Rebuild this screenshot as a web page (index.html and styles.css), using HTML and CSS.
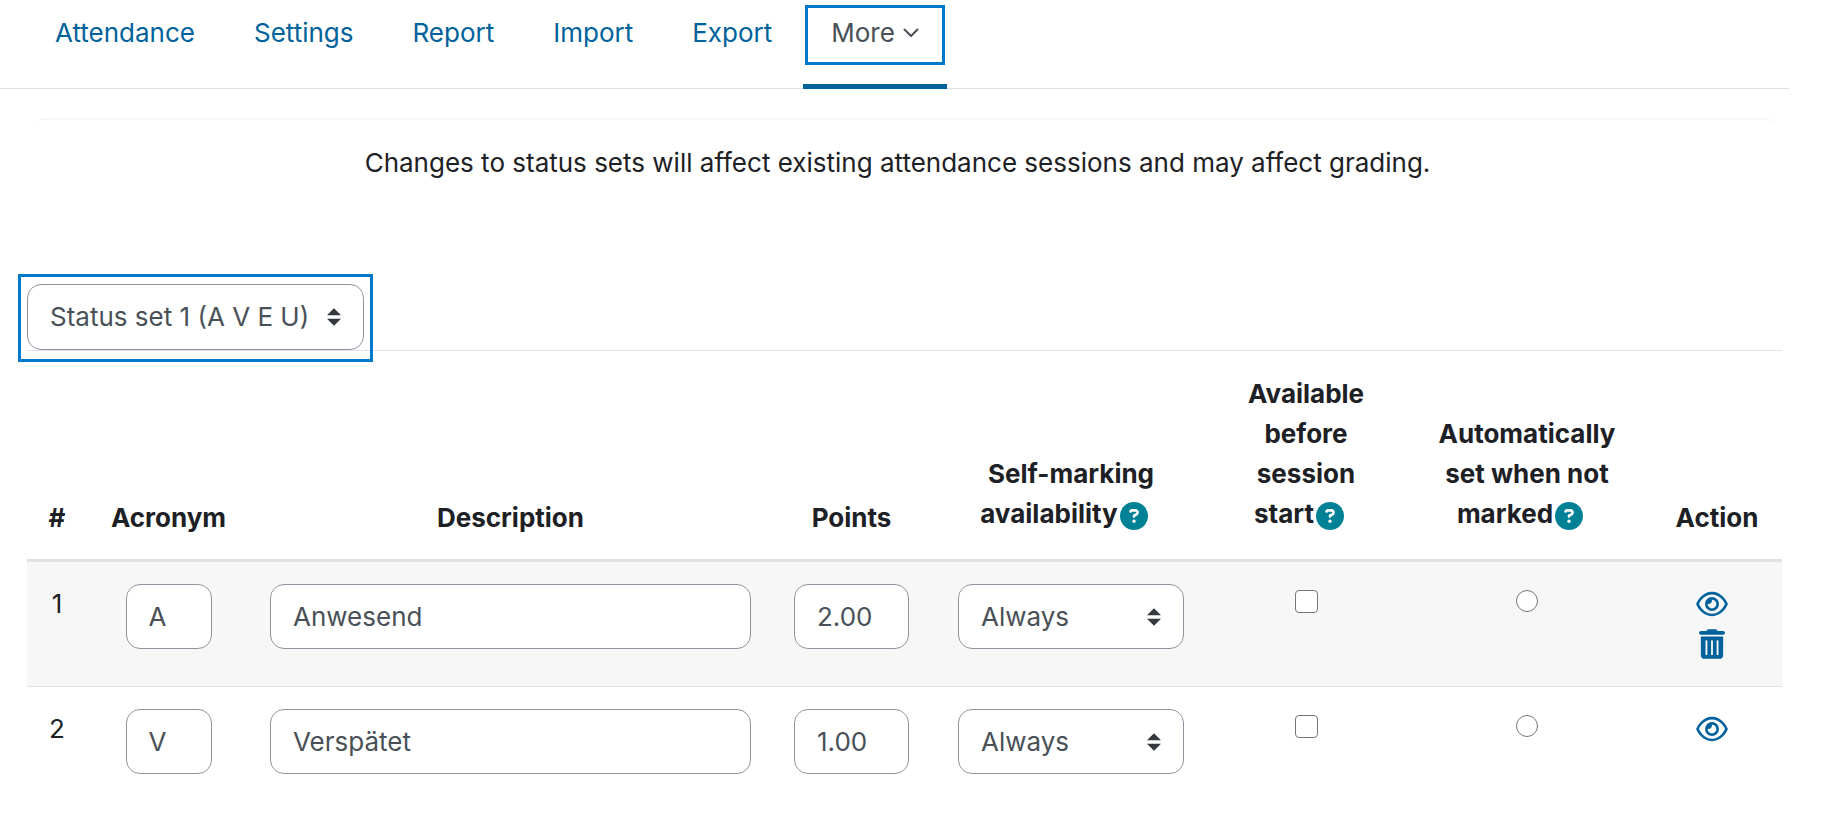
FILE: index.html
```html
<!DOCTYPE html>
<html lang="en">

<head>
    <meta charset="UTF-8">
    <meta name="viewport" content="width=device-width, initial-scale=1.0">
    <title>Attendance</title>
    <link rel="stylesheet" href="styles.css">
</head>

<body>
    <!-- shared icons -->
    <svg class="icon-defs" aria-hidden="true">
        <symbol id="icon-help" viewBox="0 0 512 512">
            <path d="M256 512A256 256 0 1 0 256 0a256 256 0 1 0 0 512zM169.800 165.300c7.900-22.300 29.100-37.300 52.800-37.300h58.300c34.900 0 63.100 28.300 63.100 63.100c0 22.600-12.100 43.500-31.700 54.800L280 264.400c-.2 13-10.900 23.600-24 23.600c-13.300 0-24-10.700-24-24V250.500c0-8.600 4.600-16.500 12.100-20.800l44.300-25.400c4.700-2.700 7.600-7.700 7.600-13.100c0-8.400-6.800-15.100-15.100-15.100H222.600c-3.400 0-6.400 2.100-7.500 5.300l-.4 1.200c-4.400 12.500-18.200 19-30.600 14.600s-19-18.200-14.600-30.600l.4-1.200zM224 352a32 32 0 1 1 64 0 32 32 0 1 1 -64 0z" />
        </symbol>
        <symbol id="icon-eye" viewBox="0 0 576 512">
            <path d="M288 80c-65.200 0-118.800 29.600-159.900 67.700C89.600 183.500 63 226 49.400 256c13.600 30 40.200 72.500 78.600 108.300C169.200 402.400 222.800 432 288 432s118.800-29.600 159.900-67.700C486.400 328.500 513 286 526.600 256c-13.600-30-40.200-72.500-78.700-108.300C406.800 109.600 353.200 80 288 80zM95.400 112.600C142.500 68.800 207.200 32 288 32s145.500 36.800 192.600 80.600c46.800 43.500 78.100 95.400 93 131.100c3.300 7.900 3.300 16.700 0 24.600c-14.900 35.700-46.200 87.700-93 131.100C433.500 443.200 368.800 480 288 480s-145.500-36.800-192.600-80.600C48.600 356 17.300 304 2.500 268.300c-3.300-7.900-3.300-16.700 0-24.600C17.300 208 48.600 156 95.400 112.600zM288 336c44.200 0 80-35.800 80-80s-35.800-80-80-80c-.7 0-1.300 0-2 0c1.300 5.100 2 10.500 2 16c0 35.300-28.700 64-64 64c-5.500 0-10.900-.7-16-2c0 .7 0 1.300 0 2c0 44.200 35.800 80 80 80zm0-208a128 128 0 1 1 0 256 128 128 0 1 1 0-256z" />
        </symbol>
        <symbol id="icon-trash" viewBox="0 0 448 512">
            <path d="M135.200 17.700C140.600 6.800 151.700 0 163.800 0H284.200c12.100 0 23.200 6.800 28.600 17.700L320 32h96c17.700 0 32 14.300 32 32s-14.300 32-32 32H32C14.300 96 0 81.700 0 64S14.300 32 32 32h96l7.200-14.300zM32 128H416V448c0 35.300-28.700 64-64 64H96c-35.300 0-64-28.700-64-64V128zm96 64c-8.800 0-16 7.200-16 16V432c0 8.800 7.200 16 16 16s16-7.200 16-16V208c0-8.800-7.200-16-16-16zm96 0c-8.800 0-16 7.200-16 16V432c0 8.800 7.200 16 16 16s16-7.200 16-16V208c0-8.800-7.200-16-16-16zm96 0c-8.800 0-16 7.200-16 16V432c0 8.800 7.200 16 16 16s16-7.200 16-16V208c0-8.800-7.200-16-16-16z" />
        </symbol>
    </svg>

    <nav class="tabs">
        <a href="#" class="tab">Attendance</a>
        <a href="#" class="tab">Settings</a>
        <a href="#" class="tab">Report</a>
        <a href="#" class="tab">Import</a>
        <a href="#" class="tab">Export</a>
        <button type="button" class="tab tab-more">More
            <svg class="chevron" viewBox="0 0 16 10" aria-hidden="true">
                <path d="M1.500 1.500L8 8l6.500-6.500" />
            </svg>
        </button>
    </nav>

    <main class="content">
        <div class="notice">Changes to status sets will affect existing attendance sessions and may affect grading.</div>

        <div class="set-picker">
            <select class="field select" id="statusset" aria-label="Status set">
                <option>Status set 1 (A V E U)</option>
            </select>
        </div>

        <table class="status-table">
            <colgroup>
                <col class="col-num">
                <col class="col-acronym">
                <col>
                <col class="col-points">
                <col class="col-self">
                <col class="col-before">
                <col class="col-auto">
                <col class="col-action">
            </colgroup>
            <thead>
                <tr>
                    <th>#</th>
                    <th>Acronym</th>
                    <th>Description</th>
                    <th>Points</th>
                    <th class="has-help">Self-marking availability<button type="button" class="help" aria-label="Help with self-marking"><svg><use href="#icon-help" /></svg></button></th>
                    <th class="has-help">Available before session start<button type="button" class="help" aria-label="Help with available before start"><svg><use href="#icon-help" /></svg></button></th>
                    <th class="has-help">Automatically set when not marked<button type="button" class="help" aria-label="Help with automatic status"><svg><use href="#icon-help" /></svg></button></th>
                    <th>Action</th>
                </tr>
            </thead>
            <tbody>
                <tr>
                    <td>1</td>
                    <td><input type="text" class="field field-acronym" value="A" aria-label="Acronym"></td>
                    <td><input type="text" class="field field-description" value="Anwesend" aria-label="Description"></td>
                    <td><input type="text" class="field field-points" value="2.00" aria-label="Points"></td>
                    <td>
                        <select class="field select field-self" aria-label="Self-marking availability">
                            <option>Always</option>
                        </select>
                    </td>
                    <td><input type="checkbox" class="check" aria-label="Available before session start"></td>
                    <td><input type="radio" name="setunmarked" class="check radio" aria-label="Automatically set when not marked"></td>
                    <td>
                        <div class="actions">
                            <a href="#" aria-label="Hide"><svg class="eye"><use href="#icon-eye" /></svg></a>
                            <a href="#" aria-label="Delete"><svg class="trash"><use href="#icon-trash" /></svg></a>
                        </div>
                    </td>
                </tr>
                <tr>
                    <td>2</td>
                    <td><input type="text" class="field field-acronym" value="V" aria-label="Acronym"></td>
                    <td><input type="text" class="field field-description" value="Verspätet" aria-label="Description"></td>
                    <td><input type="text" class="field field-points" value="1.00" aria-label="Points"></td>
                    <td>
                        <select class="field select field-self" aria-label="Self-marking availability">
                            <option>Always</option>
                        </select>
                    </td>
                    <td><input type="checkbox" class="check" aria-label="Available before session start"></td>
                    <td><input type="radio" name="setunmarked" class="check radio" aria-label="Automatically set when not marked"></td>
                    <td>
                        <div class="actions">
                            <a href="#" aria-label="Hide"><svg class="eye"><use href="#icon-eye" /></svg></a>
                        </div>
                    </td>
                </tr>
            </tbody>
        </table>
    </main>
</body>

</html>
```

FILE: styles.css
```css
* {
    box-sizing: border-box;
}

body {
    margin: 0;
    background: #fff;
    color: #1d2125;
    font-family: Inter, "Liberation Sans", sans-serif;
    font-size: 26px;
    line-height: 40px;
}

button,
input,
select {
    margin: 0;
    font: inherit;
}

.icon-defs {
    display: none;
}

/* tabs */

.tabs {
    display: flex;
    gap: 3px;
    margin-right: 47px;
    padding-left: 27px;
    border-bottom: 1px solid #dee2e6;
}

.tab {
    height: 89px;
    margin-bottom: -1px;
    padding: 13px 28px 0;
    border: 0;
    border-bottom: 5px solid transparent;
    background: none;
    color: #00629b;
    text-decoration: none;
}

.tab-more {
    display: flex;
    align-items: flex-start;
    gap: 8px;
    position: relative;
    border-bottom-color: #00629b;
    color: #495057;
}

.chevron {
    width: 16px;
    height: 10px;
    margin-top: 15px;
    fill: none;
    stroke: #495057;
    stroke-width: 2;
    stroke-linecap: round;
    stroke-linejoin: round;
}

/* highlight frames */

.tab-more::before,
.set-picker::after {
    content: "";
    position: absolute;
    border: 3px solid #0079cc;
    pointer-events: none;
}

.tab-more::before {
    inset: 5px 2px 19px;
}

.set-picker::after {
    inset: -10px -9px -12px;
}

.content {
    padding: 29px 54px 0 27px;
}

.notice {
    margin: 0 8px;
    padding: 23px 14px 101px 0;
    border-top: 2px solid #f8f8f9;
    border-radius: 8px;
    text-align: center;
}

.set-picker {
    position: relative;
    width: 337px;
}

/* form fields */

.field {
    display: block;
    width: 100%;
    height: 65px;
    padding: 0 22px;
    border: 1px solid #8f959e;
    border-radius: 14px;
    background-color: #fff;
    color: #495057;
}

.select {
    appearance: none;
    background-image: url("data:image/svg+xml,%3csvg xmlns='http://www.w3.org/2000/svg' viewBox='0 0 4 5'%3e%3cpath fill='%23343a40' d='M2 0L0 2h4zm0 5L0 3h4z'/%3e%3c/svg%3e");
    background-repeat: no-repeat;
    background-position: right 22px center;
    background-size: 14px 18px;
}

.set-picker .select {
    height: 66px;
}

.field-acronym {
    width: 86px;
    margin: 0 auto;
}

.field-points {
    width: 115px;
    margin: 0 auto;
}

.field-self {
    width: 226px;
    margin: 0 auto;
}

.check {
    display: block;
    width: 23px;
    height: 23px;
    margin: 6px auto 0;
    appearance: none;
    border: 1px solid #767676;
    border-radius: 4px;
    background: #fff;
}

.radio {
    width: 22px;
    height: 22px;
    border-radius: 50%;
}

/* status table */

.status-table {
    width: 100%;
    table-layout: fixed;
    border-spacing: 0;
    border-top: 1px solid #dee2e6;
    text-align: center;
}

.col-num {
    width: 60px;
}

.col-acronym {
    width: 163px;
}

.col-points {
    width: 161px;
}

.col-self {
    width: 278px;
}

.col-before {
    width: 192px;
}

.col-auto {
    width: 250px;
}

.col-action {
    width: 130px;
}

.status-table th {
    padding: 23px 20px 21px;
    border-bottom: 3px solid #dee2e6;
    font-weight: 700;
    vertical-align: bottom;
}

.status-table .has-help {
    padding-bottom: 25px;
}

.status-table td {
    height: 125px;
    padding: 22px 20px 0;
    border-bottom: 1px solid #dee2e6;
    vertical-align: top;
}

.status-table tr:last-child td {
    border-bottom: 0;
}

.status-table th:first-child {
    padding-left: 0;
    padding-right: 0;
}

.status-table th:nth-child(2) {
    padding-left: 10px;
    padding-right: 10px;
}

.status-table tbody tr:nth-child(odd) {
    background: #f7f7f7;
}

.help {
    width: 28px;
    height: 28px;
    margin: 0 14px 0 2px;
    padding: 0;
    border: 0;
    background: none;
    vertical-align: middle;
}

.help svg {
    display: block;
    width: 28px;
    height: 28px;
    fill: #008196;
}

.actions {
    display: flex;
    flex-direction: column;
    align-items: center;
    padding-right: 10px;
}

.actions a {
    display: flex;
    align-items: center;
    justify-content: center;
    height: 40px;
}

.actions svg {
    fill: #00629b;
}

.eye {
    width: 32px;
    height: 28px;
}

.trash {
    width: 26px;
    height: 30px;
}
```
